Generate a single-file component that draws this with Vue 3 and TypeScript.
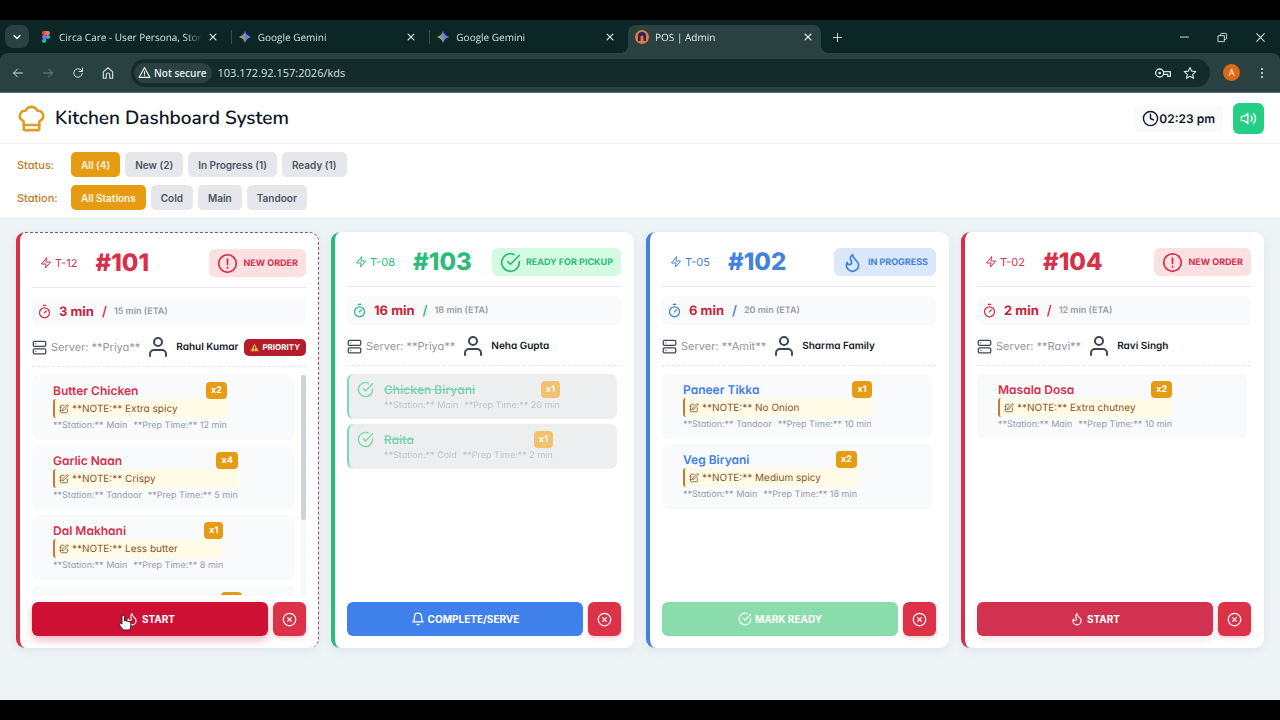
<script setup lang="ts">
import { h, ref, type FunctionalComponent } from 'vue'

const paths: Record<string, string[]> = {
  chef: [
    'M17 21a1 1 0 0 0 1-1v-5.35c0-.457.316-.844.727-1.041a4 4 0 0 0-2.134-7.589 5 5 0 0 0-9.186 0 4 4 0 0 0-2.134 7.588c.411.198.727.585.727 1.041V20a1 1 0 0 0 1 1Z',
    'M6 17h12',
  ],
  clock: ['M12 2a10 10 0 1 0 0 20 10 10 0 0 0 0-20z', 'M12 6v6l4 2'],
  volume: ['M11 5 6 9H2v6h4l5 4V5z', 'M15.5 8.5a5 5 0 0 1 0 7', 'M19 5a10 10 0 0 1 0 14'],
  zap: ['M13 2 3 14h9l-1 8 10-12h-9l1-8z'],
  alert: ['M12 2a10 10 0 1 0 0 20 10 10 0 0 0 0-20z', 'M12 7v6', 'M12 16.5v.5'],
  check: ['M22 11.08V12a10 10 0 1 1-5.93-9.14', 'M22 4 12 14l-3-3'],
  flame: [
    'M8.5 14.5A2.5 2.5 0 0 0 11 12c0-1.38-.5-2-1-3-1.072-2.143-.224-4.054 2-6 .5 2.5 2 4.9 4 6.5 2 1.6 3 3.5 3 5.5a7 7 0 1 1-14 0c0-1.153.433-2.294 1-3a2.5 2.5 0 0 0 2.5 2.5z',
  ],
  timer: ['M10 2h4', 'M12 14l3-3', 'M12 6a8 8 0 1 0 0 16 8 8 0 0 0 0-16z'],
  server: [
    'M4 2h16a2 2 0 0 1 2 2v4a2 2 0 0 1-2 2H4a2 2 0 0 1-2-2V4a2 2 0 0 1 2-2z',
    'M4 14h16a2 2 0 0 1 2 2v4a2 2 0 0 1-2 2H4a2 2 0 0 1-2-2v-4a2 2 0 0 1 2-2z',
    'M6 6h.01',
    'M6 18h.01',
  ],
  user: ['M20 21v-2a4 4 0 0 0-4-4H8a4 4 0 0 0-4 4v2', 'M12 3a4 4 0 1 0 0 8 4 4 0 0 0 0-8z'],
  edit: ['M12 3H6a2 2 0 0 0-2 2v14a2 2 0 0 0 2 2h12a2 2 0 0 0 2-2v-7', 'M18.5 2.5a2.1 2.1 0 0 1 3 3L12 15l-4 1 1-4z', 'M2 8h3M2 16h3'],
  bell: ['M18 8A6 6 0 0 0 6 8c0 7-3 9-3 9h18s-3-2-3-9', 'M13.73 21a2 2 0 0 1-3.46 0'],
  cancel: ['M12 2a10 10 0 1 0 0 20 10 10 0 0 0 0-20z', 'M15 9l-6 6', 'M9 9l6 6'],
  close: ['M5 5l14 14', 'M19 5 5 19'],
  plus: ['M12 3v18', 'M3 12h18'],
  minus: ['M3 11h18'],
  restore: ['M3 8h13v13H3z', 'M8 8V5a2 2 0 0 1 2-2h9a2 2 0 0 1 2 2v9a2 2 0 0 1-2 2h-3'],
  down: ['M6 9l6 6 6-6'],
  back: ['M21 12H4', 'M11 4l-8 8 8 8'],
  forward: ['M3 12h17', 'M13 4l8 8-8 8'],
  reload: ['M20.500 13a8.500 8.500 0 1 1-3-7.500L20.500 8.500', 'M21 2v7h-7'],
  home: ['M4 10l8-7 8 7v11h-5v-6a3 3 0 0 0-6 0v6H4z'],
  warn: ['M12 3 2 21h20z', 'M12 10v5', 'M12 17.500v.5'],
  key: ['M7 6a6 6 0 1 0 0 12 6 6 0 0 0 0-12z', 'M7 11a1 1 0 1 0 0 2 1 1 0 0 0 0-2z', 'M13 10h10v7h-4v-3h-6'],
  star: ['M12 2.500l2.900 6.300 6.900.8-5.100 4.700 1.400 6.800L12 17.700l-6.100 3.400 1.400-6.800-5.100-4.700 6.900-.8z'],
}

const Icon: FunctionalComponent<{ name: string; size?: number; weight?: number }> = (props) =>
  h(
    'svg',
    {
      class: 'icon',
      width: props.size ?? 14,
      height: props.size ?? 14,
      viewBox: '0 0 24 24',
      fill: 'none',
      stroke: 'currentColor',
      'stroke-width': props.weight ?? 2,
      'stroke-linecap': 'round',
      'stroke-linejoin': 'round',
      'aria-hidden': 'true',
    },
    (paths[props.name] ?? []).map((d) => h('path', { d })),
  )
Icon.props = ['name', 'size', 'weight']

interface Item {
  name: string
  qty: number
  station: string
  prep: number
  note?: string
  done?: boolean
}
interface Order {
  id: string
  table: string
  tone: 'red' | 'green' | 'blue'
  status: string
  statusIcon: string
  elapsed: number
  eta: number
  server: string
  customer: string
  priority?: boolean
  active?: boolean
  action: string
  actionIcon: string
  actionTone: string
  items: Item[]
}

const tabs = [
  { title: 'Circa Care - User Persona, Story', icon: 'figma' },
  { title: 'Google Gemini', icon: 'gemini' },
  { title: 'Google Gemini', icon: 'gemini' },
  { title: 'POS | Admin', icon: 'pos', active: true },
]

const url = ref('103.172.92.157:2026/kds')
const statuses = ['All (4)', 'New (2)', 'In Progress (1)', 'Ready (1)']
const stations = ['All Stations', 'Cold', 'Main', 'Tandoor']
const status = ref(statuses[0])
const station = ref(stations[0])

const orders: Order[] = [
  {
    id: '#101', table: 'T-12', tone: 'red', status: 'NEW ORDER', statusIcon: 'alert', elapsed: 3, eta: 15,
    server: 'Priya', customer: 'Rahul Kumar', priority: true, active: true,
    action: 'START', actionIcon: 'flame', actionTone: 'crimson',
    items: [
      { name: 'Butter Chicken', qty: 2, station: 'Main', prep: 12, note: 'Extra spicy' },
      { name: 'Garlic Naan', qty: 4, station: 'Tandoor', prep: 5, note: 'Crispy' },
      { name: 'Dal Makhani', qty: 1, station: 'Main', prep: 8, note: 'Less butter' },
      { name: 'Jeera Rice', qty: 2, station: 'Tandoor', prep: 10 },
    ],
  },
  {
    id: '#103', table: 'T-08', tone: 'green', status: 'READY FOR PICKUP', statusIcon: 'check', elapsed: 16, eta: 18,
    server: 'Priya', customer: 'Neha Gupta', action: 'COMPLETE/SERVE', actionIcon: 'bell', actionTone: 'azure',
    items: [
      { name: 'Chicken Biryani', qty: 1, station: 'Main', prep: 20, done: true },
      { name: 'Raita', qty: 1, station: 'Cold', prep: 2, done: true },
    ],
  },
  {
    id: '#102', table: 'T-05', tone: 'blue', status: 'IN PROGRESS', statusIcon: 'flame', elapsed: 6, eta: 20,
    server: 'Amit', customer: 'Sharma Family', action: 'MARK READY', actionIcon: 'check', actionTone: 'mint',
    items: [
      { name: 'Paneer Tikka', qty: 1, station: 'Tandoor', prep: 10, note: 'No Onion' },
      { name: 'Veg Biryani', qty: 2, station: 'Main', prep: 18, note: 'Medium spicy' },
    ],
  },
  {
    id: '#104', table: 'T-02', tone: 'red', status: 'NEW ORDER', statusIcon: 'alert', elapsed: 2, eta: 12,
    server: 'Ravi', customer: 'Ravi Singh', action: 'START', actionIcon: 'flame', actionTone: 'rose',
    items: [{ name: 'Masala Dosa', qty: 2, station: 'Main', prep: 10, note: 'Extra chutney' }],
  },
]
</script>

<template>
  <div class="screen">
    <div class="browser">
      <div class="tabstrip">
        <button class="tab-search" aria-label="Search tabs"><Icon name="down" :size="12" :weight="3" /></button>
        <div class="tabs">
          <div v-for="(tab, i) in tabs" :key="i" class="tab" :class="{ active: tab.active }">
            <svg v-if="tab.icon === 'figma'" class="favicon" width="14" height="14" viewBox="0 0 14 14" aria-hidden="true">
              <path d="M7 1H5a2 2 0 0 0 0 4h2z" fill="#f24e1e" />
              <path d="M7 1h2a2 2 0 0 1 0 4H7z" fill="#ff7262" />
              <path d="M7 5H5a2 2 0 0 0 0 4h2z" fill="#a259ff" />
              <circle cx="9" cy="7" r="2" fill="#1abcfe" />
              <path d="M7 9H5a2 2 0 1 0 2 2z" fill="#0acf83" />
            </svg>
            <svg v-else-if="tab.icon === 'gemini'" class="favicon" width="14" height="14" viewBox="0 0 14 14" aria-hidden="true">
              <defs>
                <linearGradient :id="'spark' + i" x1="0" y1="0.6" x2="1" y2="0.4">
                  <stop offset="0" stop-color="#f5c518" />
                  <stop offset="0.3" stop-color="#58b368" />
                  <stop offset="0.45" stop-color="#c86fa0" />
                  <stop offset="0.6" stop-color="#4a86f0" />
                  <stop offset="1" stop-color="#4a90f5" />
                </linearGradient>
              </defs>
              <path d="M7 1c1 3.200 2.800 5 6 6-3.200 1-5 2.800-6 6-1-3.200-2.800-5-6-6 3.200-1 5-2.800 6-6z" :fill="`url(#spark${i})`" />
            </svg>
            <svg v-else class="favicon" width="14" height="14" viewBox="0 0 14 14" aria-hidden="true">
              <circle cx="7" cy="7" r="7" fill="#e07b3c" />
              <path d="M3 11V6a4 4 0 0 1 8 0v5H8.500V7a1.500 1.500 0 0 0-3 0v4z" fill="#35205c" />
            </svg>
            <span class="tab-title">{{ tab.title }}</span>
            <button class="tab-close" :aria-label="'Close ' + tab.title"><Icon name="close" :size="10" :weight="3" /></button>
          </div>
        </div>
        <button class="bare new-tab" aria-label="New tab"><Icon name="plus" :size="11" /></button>
        <div class="window-controls">
          <button class="bare" aria-label="Minimize"><Icon name="minus" :size="11" /></button>
          <button class="bare" aria-label="Restore"><Icon name="restore" :size="11" /></button>
          <button class="bare" aria-label="Close window"><Icon name="close" :size="13" /></button>
        </div>
      </div>
      <div class="toolbar">
        <button class="bare nav" aria-label="Back"><Icon name="back" :size="12" /></button>
        <button class="bare nav faded" aria-label="Forward"><Icon name="forward" :size="12" /></button>
        <button class="bare nav" aria-label="Reload"><Icon name="reload" :size="12" /></button>
        <button class="bare nav" aria-label="Home"><Icon name="home" :size="14" /></button>
        <div class="omnibox">
          <button class="security"><Icon name="warn" :size="13" />Not secure</button>
          <input v-model="url" class="url" type="text" aria-label="Address" />
          <button class="bare" aria-label="Saved password"><Icon name="key" :size="16" /></button>
          <button class="bare" aria-label="Bookmark"><Icon name="star" :size="14" /></button>
        </div>
        <button class="avatar" aria-label="Profile">A</button>
        <button class="bare dots" aria-label="Menu"><i></i><i></i><i></i></button>
      </div>
    </div>

    <div class="page">
      <header class="topbar">
        <Icon class="logo" name="chef" :size="31" />
        <h1>Kitchen Dashboard System</h1>
        <time class="clock"><Icon name="clock" :size="17" />02:23 pm</time>
        <button class="sound" aria-label="Toggle sound"><Icon name="volume" :size="17" /></button>
      </header>

      <section class="filters">
        <div class="filter-row">
          <span class="filter-label">Status:</span>
          <button v-for="s in statuses" :key="s" class="pill" :class="{ on: s === status }" @click="status = s">{{ s }}</button>
        </div>
        <div class="filter-row">
          <span class="filter-label">Station:</span>
          <button v-for="s in stations" :key="s" class="pill" :class="{ on: s === station }" @click="station = s">{{ s }}</button>
        </div>
      </section>

      <main class="board">
        <article v-for="order in orders" :key="order.id" class="card" :class="[order.tone, { dashed: order.active }]">
          <div class="card-head">
            <span class="table"><Icon name="zap" :size="12" />{{ order.table }}</span>
            <h2>{{ order.id }}</h2>
            <span class="badge"><Icon :name="order.statusIcon" :size="21" />{{ order.status }}</span>
          </div>
          <div class="timing">
            <Icon name="timer" :size="15" />
            <strong>{{ order.elapsed }} min</strong>
            <span class="slash">/</span>
            <span class="eta">{{ order.eta }} min (ETA)</span>
          </div>
          <div class="people">
            <Icon name="server" :size="15" />
            <span class="server">Server: **{{ order.server }}**</span>
            <Icon name="user" :size="24" />
            <span class="customer">{{ order.customer }}</span>
            <span v-if="order.priority" class="priority">
              <svg width="9" height="9" viewBox="0 0 24 24" aria-hidden="true">
                <path d="M12 2 1 22h22z" fill="#f5b53d" />
                <path d="M12 9v6M12 18v1" stroke="#3b2a10" stroke-width="3" />
              </svg>
              PRIORITY
            </span>
          </div>
          <div class="list-wrap">
            <ul class="list">
              <li v-for="item in order.items" :key="item.name" class="item" :class="{ done: item.done }">
                <Icon v-if="item.done" class="tick" name="check" :size="17" />
                <div class="details">
                  <div class="item-head">
                    <span class="item-name">{{ item.name }}</span>
                    <span class="qty">x{{ item.qty }}</span>
                  </div>
                  <div v-if="item.note" class="note"><Icon name="edit" :size="10" />**NOTE:** {{ item.note }}</div>
                  <div class="meta">
                    <span>**Station:** {{ item.station }}</span>
                    <span>**Prep Time:** {{ item.prep }} min</span>
                  </div>
                </div>
              </li>
            </ul>
            <div v-if="order.active" class="scroll-track"><div class="scroll-thumb"></div></div>
          </div>
          <div class="actions">
            <button class="primary" :class="order.actionTone"><Icon :name="order.actionIcon" :size="14" />{{ order.action }}</button>
            <button class="cancel" :aria-label="'Cancel ' + order.id"><Icon name="cancel" :size="15" /></button>
            <svg v-if="order.active" class="pointer" width="14" height="18" viewBox="0 0 14 18" aria-hidden="true">
              <path
                d="M4 10V2.500a1.300 1.300 0 0 1 2.600 0V7c1-.6 1.900-.3 2.200.4.900-.5 1.800-.2 2.100.6 1-.3 1.900.2 1.900 1.300v3.200c0 1.300-.8 2-.9 3.500H5.200c-.5-1.500-2.600-3-3.800-5.300-.6-1.300.9-2 1.800-1z"
                fill="#fff" stroke="#222" stroke-width="1"
              />
            </svg>
          </div>
        </article>
      </main>
    </div>
  </div>
</template>

<style>
body {
  margin: 0;
  background: #000;
}
</style>

<style scoped>
* {
  box-sizing: border-box;
}
button {
  font-family: inherit;
  border: 0;
  padding: 0;
  cursor: pointer;
  display: flex;
  align-items: center;
  justify-content: center;
}
.icon {
  flex: none;
  display: block;
}
.screen {
  height: 100vh;
  padding: 20px 0;
  background: #000;
  display: flex;
  flex-direction: column;
  font-family: Inter, 'Liberation Sans', sans-serif;
  font-optical-sizing: none;
  text-rendering: geometricPrecision;
}

/* Browser chrome */
.browser {
  background: #0b2625;
  color: #d5e2e0;
  font-family: 'Open Sans', 'Noto Sans', sans-serif;
  font-size: 10px;
}
.bare {
  background: none;
  color: inherit;
}
.tabstrip {
  height: 33px;
  padding: 5px 5px 0;
  display: flex;
  align-items: stretch;
}
.tab-search {
  width: 24px;
  height: 23px;
  border-radius: 8px;
  background: #294140;
  color: #e6f0ee;
}
.tabs {
  display: flex;
  flex: 0 1 789px;
  margin-left: 3px;
}
.tab {
  flex: 1;
  min-width: 0;
  display: flex;
  align-items: center;
  gap: 6px;
  padding: 0 8px 5px 7px;
  position: relative;
}
.tab + .tab:not(.active)::before {
  content: '';
  position: absolute;
  left: 0;
  top: 5px;
  width: 1px;
  height: 14px;
  background: #35504e;
}
.tab.active {
  flex: 0 1 193px;
  padding-right: 3px;
  background: #294140;
  border-radius: 8px 8px 0 0;
  color: #e6f0ee;
}
.tab.active::before,
.tab.active::after {
  content: '';
  position: absolute;
  bottom: 0;
  width: 8px;
  height: 8px;
}
.tab.active::before {
  left: -8px;
  background: radial-gradient(circle at 0 0, transparent 8px, #294140 8px);
}
.tab.active::after {
  right: -8px;
  background: radial-gradient(circle at 100% 0, transparent 8px, #294140 8px);
}
.favicon {
  flex: none;
}
.tab-title {
  flex: 1;
  min-width: 0;
  overflow: hidden;
  white-space: nowrap;
  mask-image: linear-gradient(to right, #000 88%, transparent);
}
.tab-close {
  width: 20px;
  height: 20px;
  margin-left: -6px;
  background: none;
  color: inherit;
}
.new-tab {
  width: 32px;
  height: 24px;
}
.window-controls {
  margin-left: auto;
  display: flex;
  height: 24px;
}
.window-controls button {
  width: 38px;
}
.window-controls button:last-child {
  margin-right: -4px;
}
.toolbar {
  height: 40px;
  display: flex;
  align-items: center;
  padding: 0 6px 0 3px;
  background: #294140;
  border-radius: 8px 8px 0 0;
  border-bottom: 1px solid #62716f;
}
.nav {
  width: 30px;
  height: 28px;
}
.faded {
  color: #738683;
}
.omnibox {
  flex: 1;
  min-width: 0;
  height: 28px;
  margin: 0 10px 0 8px;
  padding: 0 13px 0 3px;
  border-radius: 14px;
  background: #132b2a;
  display: flex;
  align-items: center;
  gap: 12px;
}
.security {
  height: 20px;
  padding: 0 5px 0 4px;
  gap: 3px;
  border-radius: 10px;
  background: #294140;
  color: #e6f0ee;
  font-size: 10px;
  font-weight: 600;
}
.url {
  flex: 1;
  min-width: 0;
  margin-left: -6px;
  padding: 0;
  border: 0;
  outline: 0;
  background: none;
  color: #d5e2e0;
  font: 11px 'Open Sans', 'Noto Sans', sans-serif;
}
.avatar {
  width: 17px;
  height: 17px;
  margin: 0 3px;
  border-radius: 50%;
  background: #dc6a14;
  color: #fff;
  font-size: 9px;
}
.dots {
  flex-direction: column;
  gap: 2px;
  width: 24px;
  height: 28px;
  margin-left: 7px;
}
.dots i {
  width: 2px;
  height: 2px;
  border-radius: 50%;
  background: #e6f0ee;
}

/* Kitchen page */
.page {
  flex: 1;
  min-height: 0;
  display: flex;
  flex-direction: column;
  background: #eef3f6;
}
.topbar {
  display: flex;
  align-items: center;
  height: 51px;
  padding: 0 16px;
  background: #fff;
  border-bottom: 1px solid #f0f2f4;
  color: #111827;
}
.logo {
  color: #dd9c24;
}
h1 {
  margin: 0 auto 0 8px;
  font: 600 19px 'Nunito', 'Open Sans', 'Noto Sans', sans-serif;
  color: #0d1626;
}
.clock {
  display: flex;
  align-items: center;
  height: 27px;
  padding: 0 8px;
  margin-right: 10px;
  border-radius: 6px;
  background: #f9fafb;
  font-size: 12px;
  font-weight: 600;
}
.sound {
  width: 31px;
  height: 31px;
  border-radius: 6px;
  background: #23cf84;
  color: #fff;
}
.filters {
  display: flex;
  flex-direction: column;
  gap: 8px;
  padding: 8px 17px;
  background: #fff;
  border-bottom: 1px solid #e4e8eb;
}
.filter-row {
  display: flex;
  align-items: center;
  gap: 5px;
}
.filter-label {
  width: 49px;
  font-size: 11px;
  font-weight: 500;
  color: #c27a25;
  font-feature-settings: 'cv11';
}
.pill {
  height: 25px;
  padding: 0 10px;
  border-radius: 5px;
  background: #e5e7eb;
  color: #4b5563;
  font-size: 10px;
  font-weight: 600;
}
.pill.on {
  background: #e79b12;
  color: #fff8e6;
}
.board {
  flex: 1;
  min-height: 0;
  display: grid;
  grid-template-columns: repeat(4, minmax(0, 1fr));
  grid-template-rows: minmax(0, 1fr);
  gap: 12px;
  padding: 13px 16px 52px;
}
.card {
  --tone: #d6304a;
  --soft: #fce0e2;
  display: flex;
  flex-direction: column;
  min-height: 0;
  padding: 16px 13px 12px 12px;
  background: #fff;
  border-left: 4px solid var(--tone);
  border-radius: 9px;
  box-shadow: 0 3px 10px rgba(30, 50, 80, 0.07);
  font-feature-settings: 'cv11';
}
.card.dashed {
  padding-right: 12px;
  border-top: 1px dashed #8b5560;
  border-right: 1px dashed #8b5560;
}
.card.green {
  --tone: #2dbb7c;
  --soft: #d3fbe2;
}
.card.blue {
  --tone: #4481dd;
  --soft: #dbe8fb;
}
.card-head {
  display: flex;
  align-items: center;
  padding: 0 0 10px 8px;
  border-bottom: 1px solid #e5e7eb;
  color: var(--tone);
}
.table {
  display: flex;
  align-items: center;
  gap: 3px;
  font-size: 11px;
}
h2 {
  margin: 0 auto 0 18px;
  font-size: 24px;
  line-height: 28px;
  font-weight: 800;
}
.badge {
  display: flex;
  align-items: center;
  gap: 5px;
  height: 28px;
  padding: 0 8px;
  border-radius: 6px;
  background: var(--soft);
  font-size: 9px;
  font-weight: 700;
}
.timing {
  display: flex;
  align-items: center;
  height: 29px;
  margin-top: 9px;
  padding: 0 5px;
  border-radius: 6px;
  background: #f8fafb;
  color: var(--tone);
  font-size: 13px;
}
.timing strong {
  margin-left: 7px;
  font-weight: 700;
  color: #c9213c;
}
.slash {
  margin: 0 7px 0 8px;
  font-weight: 600;
}
.eta {
  font-size: 9px;
  font-weight: 600;
  color: #969ca8;
}
.people {
  display: flex;
  align-items: center;
  height: 41px;
  padding-top: 2px;
  color: #3f4652;
  border-bottom: 1px dashed #e3e6ea;
  white-space: nowrap;
}
.server {
  margin: 0 6px 0 4px;
  font-size: 11px;
  color: #8f96a3;
}
.customer {
  margin-left: 6px;
  font-size: 10px;
  font-weight: 600;
  color: #111827;
}
.priority {
  display: flex;
  align-items: center;
  gap: 3px;
  height: 17px;
  margin-left: auto;
  padding: 0 6px;
  border-radius: 5px;
  background: #b51d2c;
  color: #fff;
  font-size: 8px;
  font-weight: 700;
}
.list-wrap {
  flex: 1;
  min-height: 0;
  display: flex;
  gap: 6px;
  margin: 8px 0 7px;
}
.list {
  flex: 1;
  min-width: 0;
  margin: 0;
  padding: 0;
  list-style: none;
  overflow: hidden;
}
.list:last-child {
  margin-right: 4px;
}
.item {
  display: flex;
  padding: 7px 8px 8px 21px;
  margin-bottom: 5px;
  border-radius: 7px;
  background: #f8fafb;
}
.item.done {
  gap: 10px;
  padding: 7px 8px;
  border-left: 2px solid #2dbb7c;
  background: #e0e4e6;
  opacity: 0.6;
}
.tick {
  color: #2dbb7c;
}
.item-head {
  display: flex;
  justify-content: space-between;
  align-items: center;
  height: 17px;
}
.item-name {
  font-size: 12px;
  font-weight: 600;
  color: var(--tone);
}
.done .item-name {
  text-decoration: line-through;
}
.qty {
  height: 17px;
  padding: 0 5px;
  border-radius: 4px;
  background: #e79b12;
  color: #fff;
  font-size: 9px;
  line-height: 17px;
  font-weight: 700;
}
.note {
  display: flex;
  align-items: center;
  gap: 3px;
  height: 19px;
  padding-left: 4px;
  border-left: 2px solid #c87a35;
  border-radius: 3px 0 0 3px;
  background: #fffbe6;
  color: #8c5425;
  font-size: 10px;
}
.meta {
  display: flex;
  gap: 6px;
  height: 14px;
  align-items: flex-end;
  font-size: 9px;
  line-height: 12px;
  color: #969ca8;
  white-space: nowrap;
}
.scroll-track {
  width: 5px;
  background: #f6f7f8;
}
.scroll-thumb {
  height: 66%;
  border-radius: 3px;
  background: #cfd3d8;
}
.actions {
  position: relative;
  display: flex;
  gap: 5px;
}
.actions button {
  height: 34px;
  border-radius: 6px;
  color: #fff;
}
.primary {
  flex: 1;
  gap: 3px;
  font-size: 10px;
  font-weight: 700;
}
.actions .cancel {
  width: 33px;
  background: #dc3248;
  box-shadow: 0 2px 4px rgba(220, 50, 72, 0.25);
}
.crimson {
  background: #cf1035;
  box-shadow: 0 4px 9px rgba(207, 16, 53, 0.3);
}
.azure {
  background: #4080ea;
}
.mint {
  background: #8adcac;
}
.rose {
  background: #d33150;
  box-shadow: 0 4px 9px rgba(211, 49, 80, 0.12);
}
.pointer {
  position: absolute;
  left: 86px;
  top: 12px;
}
</style>
